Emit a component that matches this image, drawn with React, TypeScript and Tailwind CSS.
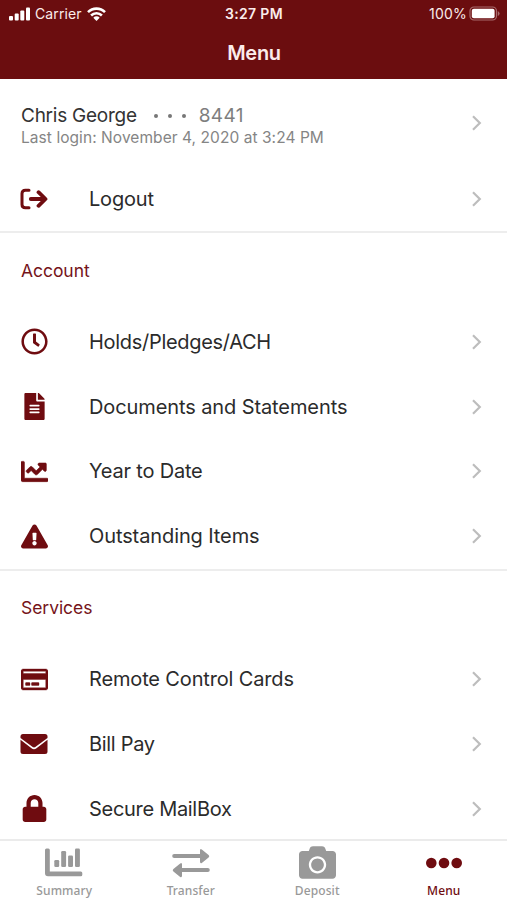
import type { ReactNode } from "react";
import {
  FaRegClock, FaFileAlt, FaChartLine, FaExclamationTriangle, FaRegCreditCard,
  FaLock, FaCamera,
} from "react-icons/fa";

function Chevron() {
  return (
    <svg width="12" height="18" viewBox="0 0 12 18" fill="none" stroke="#bdbdbd" strokeWidth="2.2" className="shrink-0">
      <path d="M2 2.3 8.8 9 2 15.7" />
    </svg>
  );
}

function SignOut() {
  return (
    <svg width="28" height="22" viewBox="0 0 28 22" fill="none" stroke="currentColor" strokeWidth="3.8" strokeLinecap="round" strokeLinejoin="round" className="shrink-0">
      <path d="M9 2.2H5.4Q2 2.2 2 5.4v11.2q0 3.2 3.4 3.2H9" strokeWidth="3" />
      <path d="M10.8 11H23M18.5 4.2l7 6.8-7 6.8" />
    </svg>
  );
}

function Envelope() {
  return (
    <svg width="28" height="22" viewBox="0 0 28 22" fill="currentColor" className="shrink-0">
      <path d="M3 1h22q2.5 0 2.5 2.5V5L15.3 14q-1.3.9-2.6 0L.5 5V3.5Q.5 1 3 1Z" />
      <path d="m.5 6.8 11 8.5q2.5 1.8 5 0l11-8.5v11.7q0 2.500-2.500 2.500H3Q.5 21 .5 18.500Z" />
    </svg>
  );
}

function Bars() {
  return (
    <svg width="38" height="29" viewBox="0 0 38 29" fill="currentColor">
      <path d="M0 2Q0 .5 1.500.5h1.800q1.500 0 1.500 1.500v21.500h31q1.500 0 1.500 1.500v1.800q0 1.500-1.500 1.500H3q-3 0-3-3Z" />
      <rect x="9.3" y="12" width="4.9" height="7" rx="1.3" />
      <rect x="16.2" y="3" width="4.9" height="16" rx="1.3" />
      <rect x="23.1" y="7.5" width="4.9" height="11.5" rx="1.3" />
      <rect x="30" y="0.5" width="4.9" height="18.5" rx="1.3" />
    </svg>
  );
}

function Row({ icon, label, spacing }: { icon: ReactNode; label: string; spacing: string }) {
  return (
    <div className="flex h-[64.75px] items-center pl-[20.5px] pr-[24px]">
      <span className="flex w-[27px] justify-center text-[#6f0c10]">{icon}</span>
      <span className={`ml-[41.5px] flex-1 whitespace-nowrap text-[20px] leading-6 text-[#2b2b2b] ${spacing}`}>{label}</span>
      <Chevron />
    </div>
  );
}

function Heading({ children }: { children: string }) {
  return (
    <h2 className="flex h-[78.25px] items-center border-t-2 border-[#ededed] pb-px pl-[21px] text-[17.5px] tracking-[-0.05px] text-[#75141a]">
      {children}
    </h2>
  );
}

function Tab({ icon, label, active }: { icon: ReactNode; label: string; active?: boolean }) {
  return (
    <div className={`flex flex-1 flex-col items-center ${active ? "text-[#6f0c10]" : "text-[#999999]"}`}>
      <span className="flex h-[43px] items-center">{icon}</span>
      <span className="font-['Noto_Sans',sans-serif] text-[12px] font-medium leading-[14px] tracking-[0.1px]">{label}</span>
    </div>
  );
}

export default function App() {
  return (
    <div className="flex h-[900px] w-[507px] flex-col overflow-hidden bg-white font-['Inter',sans-serif]">
      <header className="h-[79px] shrink-0 bg-[#6b0d0f] text-[#fbeceb]">
        <div className="grid h-[27px] grid-cols-3 items-center pl-[9px] pr-[7px] text-[14px]">
          <div className="flex items-center">
            <svg width="21" height="14" viewBox="0 0 21 14" fill="white">
              <rect x="0" y="9" width="4" height="4.5" rx="1" />
              <rect x="5.7" y="6.5" width="4" height="7" rx="1" />
              <rect x="11.3" y="3.5" width="4" height="10" rx="1" />
              <rect x="17" y="0.5" width="4" height="13" rx="1" />
            </svg>
            <span className="ml-[5px] tracking-[0.1px]">Carrier</span>
            <svg width="19" height="14" viewBox="0 0 19 14" fill="none" stroke="white" strokeWidth="2.6" className="ml-[5px]">
              <path d="M1 5.2a12 12 0 0 1 17 0M4.1 8.5a7.7 7.7 0 0 1 10.8 0" />
              <path d="M9.5 14 6.3 10.7a4.5 4.5 0 0 1 6.4 0Z" fill="white" stroke="none" />
            </svg>
          </div>
          <div className="pr-[1px] text-center font-semibold tracking-[0.35px]">3:27 PM</div>
          <div className="flex items-center justify-end">
            <span className="tracking-[0.2px]">100%</span>
            <svg width="31" height="15" viewBox="0 0 31 15" className="ml-[2px]">
              <rect x="1" y="1" width="26.5" height="13" rx="4" fill="none" stroke="#a76b6d" strokeWidth="1.2" />
              <rect x="2.8" y="2.8" width="22.8" height="9.4" rx="2" fill="white" />
              <path d="M28.8 5v5q1.8-1 1.8-2.5T28.8 5Z" fill="#a76b6d" />
            </svg>
          </div>
        </div>
        <h1 className="flex h-[51px] items-center justify-center pl-px text-[20px] font-semibold tracking-[-0.3px]">Menu</h1>
      </header>
      <main className="min-h-0 flex-1 overflow-hidden">
        <div className="flex h-[87.5px] items-center pl-[21px] pr-[24px]">
          <div className="flex-1 pt-[7px]">
            <div className="flex items-center text-[19px] leading-[22px] text-[#333]">
              <span className="tracking-[-0.25px]">Chris George</span>
              <span className="ml-[17px] flex gap-[10px]">
                <i className="size-1 rounded-full bg-[#777]" />
                <i className="size-1 rounded-full bg-[#777]" />
                <i className="size-1 rounded-full bg-[#777]" />
              </span>
              <span className="ml-[13px] tracking-[0.35px] text-[#7e7e7e]">8441</span>
            </div>
            <div className="text-[15.5px] leading-[21px] tracking-[0.06px] text-[#858585]">Last login: November 4, 2020 at 3:24 PM</div>
          </div>
          <Chevron />
        </div>
        <Row icon={<SignOut />} label="Logout" spacing="tracking-[-0.2px]" />
        <Heading>Account</Heading>
        <Row icon={<FaRegClock size={27} />} label="Holds/Pledges/ACH" spacing="tracking-[-0.3px]" />
        <Row icon={<FaFileAlt size={27} />} label="Documents and Statements" spacing="tracking-[-0.1px]" />
        <Row icon={<FaChartLine size={27} stroke="currentColor" strokeWidth={12} />} label="Year to Date" spacing="tracking-[-0.2px]" />
        <Row icon={<FaExclamationTriangle size={27} />} label="Outstanding Items" spacing="tracking-[-0.1px]" />
        <Heading>Services</Heading>
        <Row icon={<FaRegCreditCard size={27} stroke="currentColor" strokeWidth={8} />} label="Remote Control Cards" spacing="tracking-[-0.15px]" />
        <Row icon={<Envelope />} label="Bill Pay" spacing="tracking-[-0.3px]" />
        <Row icon={<FaLock size={27} />} label="Secure MailBox" spacing="tracking-[-0.3px]" />
      </main>
      <nav className="flex h-[61px] shrink-0 border-t-2 border-[#ebebeb] bg-white pl-px">
        <Tab icon={<Bars />} label="Summary" />
        <Tab
          icon={
            <svg width="38" height="30" viewBox="0 0 38 30" fill="currentColor">
              <path d="M2.2 6H28V2.5Q28 0 29.8 1.4L36.6 7q1.4 1.2 0 2.4L29.8 15Q28 16 28 13.5V10H2.2a2 2 0 0 1 0-4Z" />
              <path d="M35.8 20H10v-3.5Q10 14 8.2 15.4L1.4 21q-1.4 1.2 0 2.4L8.2 29q1.8 1 1.8-1.5V24h25.8a2 2 0 0 0 0-4Z" />
            </svg>
          }
          label="Transfer"
        />
        <Tab icon={<FaCamera size={37} />} label="Deposit" />
        <Tab
          active
          icon={
            <svg width="36" height="12" viewBox="0 0 36 12" fill="currentColor">
              <circle cx="5.3" cy="6" r="5.3" />
              <circle cx="18" cy="6" r="5.3" />
              <circle cx="30.7" cy="6" r="5.3" />
            </svg>
          }
          label="Menu"
        />
      </nav>
    </div>
  );
}
